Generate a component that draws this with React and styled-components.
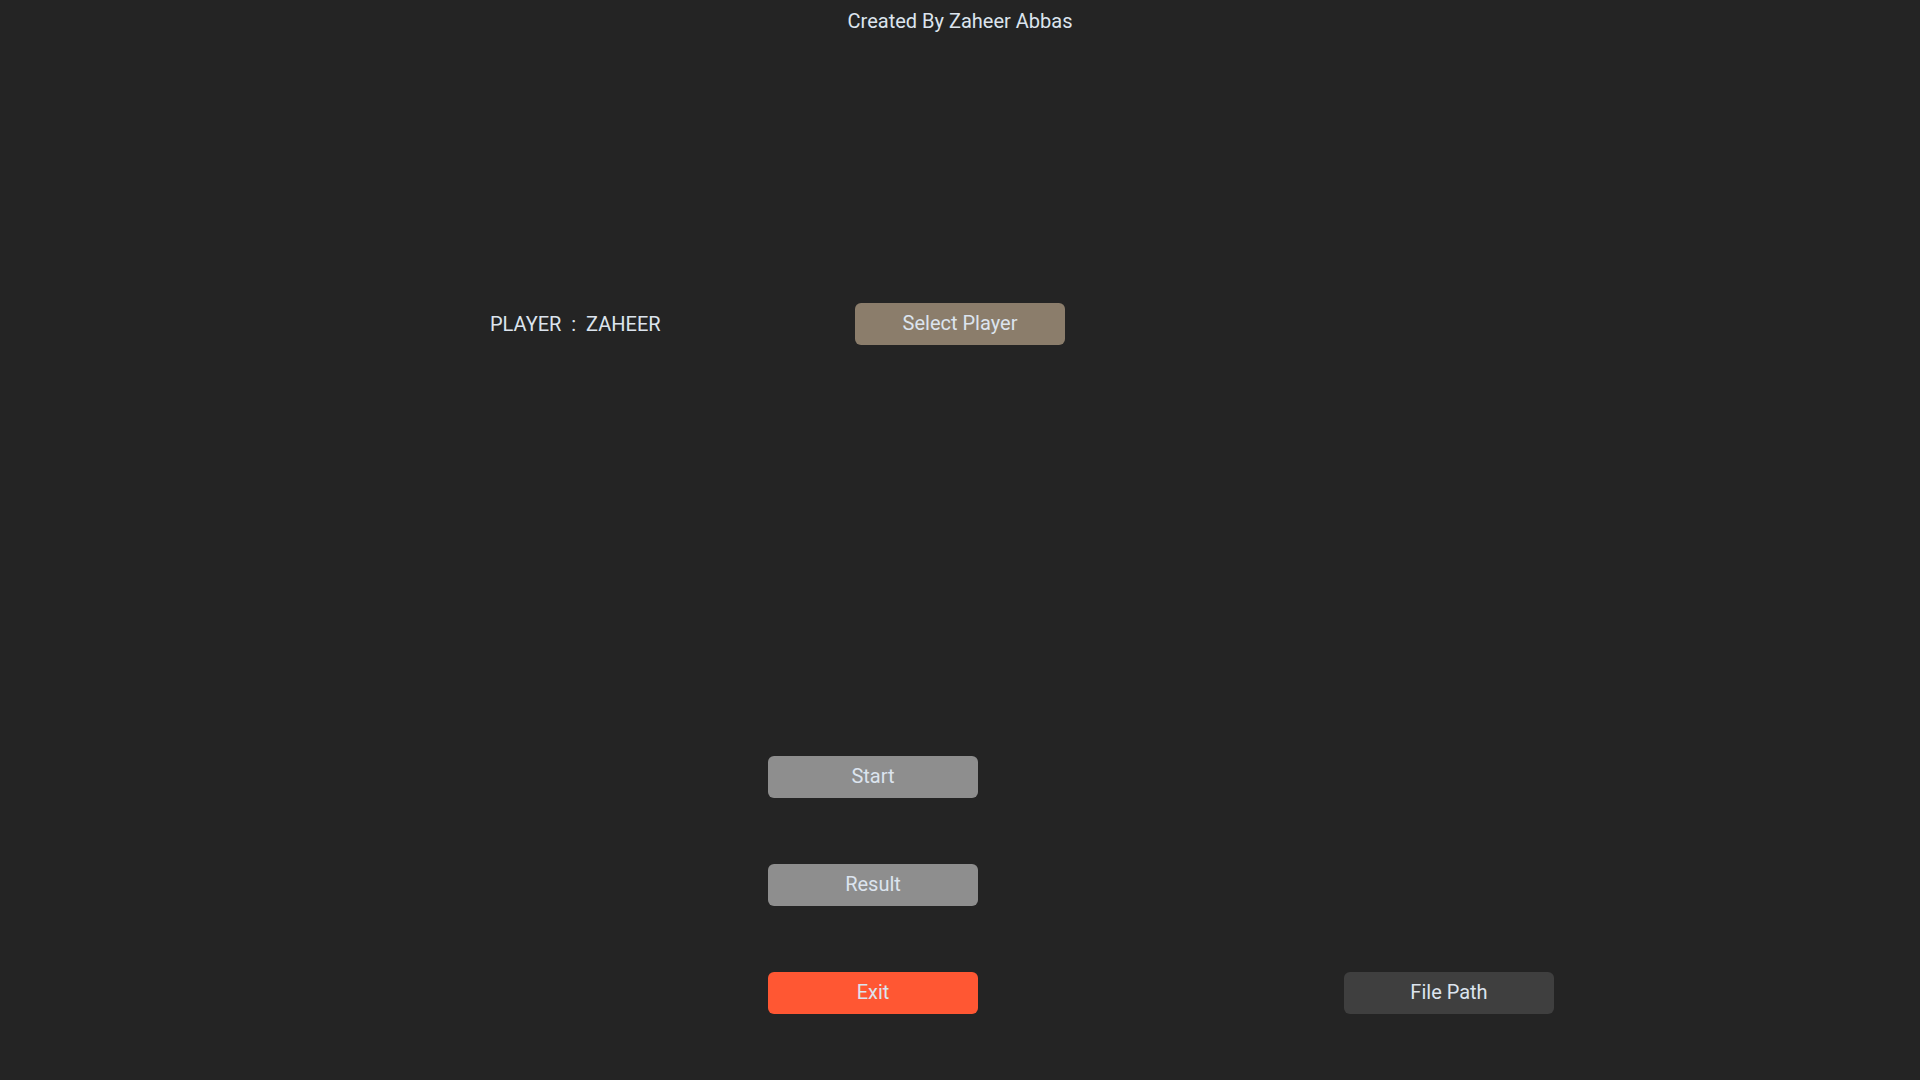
import React from "react";
import styled, { createGlobalStyle } from "styled-components";

const Global = createGlobalStyle`
  html, body { margin: 0; padding: 0; background: #242424; }
  body { font-family: Roboto, "Noto Sans", "Liberation Sans", sans-serif; }
`;

const Page = styled.div`
  width: 1920px;
  height: 1080px;
  background: #242424;
  color: #dce4ee;
  display: flex;
  flex-direction: column;
  overflow: hidden;
`;

const Header = styled.div`
  margin-top: 9px;
  height: 24px;
  line-height: 24px;
  font-size: 20px;
  text-align: center;
`;

const PlayerRow = styled.div`
  margin-top: 270px;
  height: 42px;
  display: flex;
  align-items: center;
  padding-left: 490px;
`;

const PlayerLabel = styled.div`
  width: 365px;
  font-size: 20px;
  line-height: 24px;
  white-space: pre;
`;

const ButtonGrid = styled.div`
  margin-top: 411px;
  display: grid;
  grid-template-columns: 768px 210px 366px 210px;
  grid-auto-rows: 42px;
  row-gap: 66px;
`;

const Button = styled.button`
  grid-column: ${(p) => p.$col};
  grid-row: ${(p) => p.$row};
  width: 210px;
  height: 42px;
  border: none;
  border-radius: 6px;
  background: ${(p) => p.$bg};
  color: #dce4ee;
  font-family: Roboto, "Noto Sans", "Liberation Sans", sans-serif;
  font-size: 20px;
  padding: 0 0 2px 0;
  cursor: pointer;
`;

const SelectButton = styled(Button)``;

export default function App() {
  return (
    <>
      <Global />
      <Page>
        <Header>Created By Zaheer Abbas</Header>
        <PlayerRow>
          <PlayerLabel>{"PLAYER  :  ZAHEER"}</PlayerLabel>
          <SelectButton $bg="#8b7d6b">Select Player</SelectButton>
        </PlayerRow>
        <ButtonGrid>
          <Button $col={2} $row={1} $bg="#8e8e8e">Start</Button>
          <Button $col={2} $row={2} $bg="#8e8e8e">Result</Button>
          <Button $col={2} $row={3} $bg="#ff5733">Exit</Button>
          <Button $col={4} $row={3} $bg="#3f3f3f">File Path</Button>
        </ButtonGrid>
      </Page>
    </>
  );
}
